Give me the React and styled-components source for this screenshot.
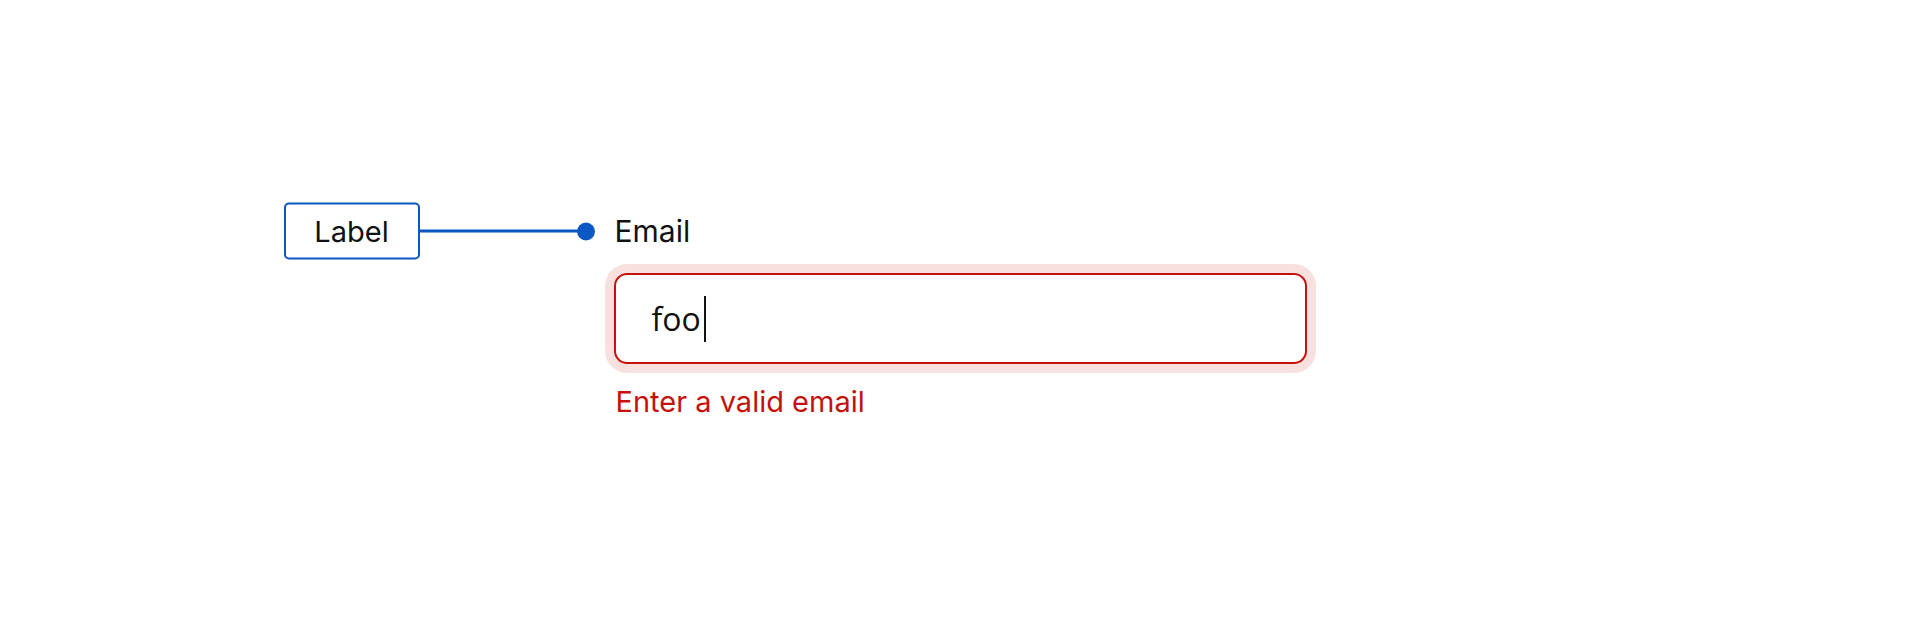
import React from "react";
import styled, { createGlobalStyle } from "styled-components";

const GlobalStyle = createGlobalStyle`
  html, body {
    margin: 0;
    padding: 0;
    background: #ffffff;
  }

  body {
    font-family: Inter, "Noto Sans", sans-serif;
    color: #111111;
  }
`;

const Page = styled.main`
  width: 1920px;
  height: 622px;
  box-sizing: border-box;
  padding-top: 213px;
  display: flex;
  justify-content: center;
  align-items: flex-start;
`;

const Field = styled.div`
  width: 693px;
  display: flex;
  flex-direction: column;
`;

const FieldLabel = styled.label`
  position: relative;
  font-size: 30px;
  line-height: 36px;
  font-weight: 400;
  color: #111111;
  margin-bottom: 24px;
  padding-left: 1px;
`;

// callout pointing at the field label
const Callout = styled.div`
  position: absolute;
  right: 100%;
  top: 50%;
  margin-right: 19px;
  transform: translateY(-50%);
  display: flex;
  align-items: center;
`;

const CalloutTag = styled.span`
  width: 136px;
  height: 57px;
  box-sizing: border-box;
  border: 2.5px solid #0b57c4;
  border-radius: 5px;
  display: flex;
  align-items: center;
  justify-content: center;
  font-size: 29px;
  line-height: 36px;
  font-weight: 400;
  color: #111111;
  background: #ffffff;
`;

const CalloutLine = styled.span`
  width: 160px;
  height: 3px;
  background: #0b57c4;
`;

const CalloutDot = styled.span`
  width: 18px;
  height: 18px;
  margin-left: -3px;
  border-radius: 50%;
  background: #0b57c4;
`;

const InputBox = styled.div`
  height: 91px;
  box-sizing: border-box;
  border: 2.5px solid ${(p) => (p.$invalid ? "#c4120c" : "#747775")};
  border-radius: 13px;
  box-shadow: ${(p) => (p.$invalid ? "0 0 0 9px #f8e0df" : "none")};
  padding: 0 36px;
  display: flex;
  align-items: center;
  font-family: "Open Sans", "Noto Sans", sans-serif;
  font-size: 32px;
  color: #111111;
`;

const Value = styled.span`
  line-height: 46px;
`;

const Caret = styled.span`
  width: 2px;
  height: 46px;
  margin-left: 3px;
  background: #111111;
`;

const ErrorText = styled.p`
  margin: 20px 0 0;
  padding-left: 2px;
  font-size: 29px;
  line-height: 36px;
  font-weight: 400;
  color: #c4120c;
`;

export default function App() {
  return (
    <>
      <GlobalStyle />
      <Page>
        <Field>
          <FieldLabel>
            <Callout>
              <CalloutTag>Label</CalloutTag>
              <CalloutLine />
              <CalloutDot />
            </Callout>
            Email
          </FieldLabel>
          <InputBox $invalid>
            <Value>foo</Value>
            <Caret />
          </InputBox>
          <ErrorText>Enter a valid email</ErrorText>
        </Field>
      </Page>
    </>
  );
}
